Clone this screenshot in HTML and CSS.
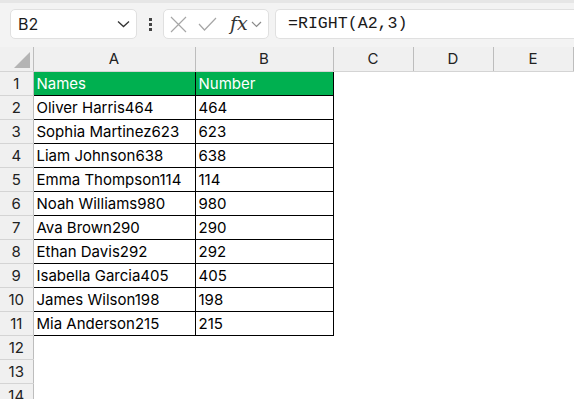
FILE: index.html
```html
<!DOCTYPE html>
<html lang="en">
<head>
    <meta charset="UTF-8">
    <title>RIGHT formula</title>
    <link rel="stylesheet" href="styles.css">
</head>
<body>
    <!-- Barra de fórmulas -->
    <div class="toolbar">
        <div class="name-box">
            <span class="name">B2</span>
            <svg class="chevron" width="13" height="8" viewBox="0 0 13 8"><path d="M1 1.5 L6.5 6.5 L12 1.5" fill="none" stroke="#333" stroke-width="1.3"/></svg>
        </div>
        <div class="dots"><i></i><i></i><i></i></div>
        <div class="fx-box">
            <svg width="17" height="17" viewBox="0 0 17 17"><path d="M1 1 L16 16 M16 1 L1 16" stroke="#a6a6a6" stroke-width="1.2"/></svg>
            <svg width="19" height="14" viewBox="0 0 19 14"><path d="M1 7 L6.5 13 L18 1" fill="none" stroke="#a6a6a6" stroke-width="1.2"/></svg>
            <span class="fx">fx</span>
            <svg width="11" height="7" viewBox="0 0 11 7"><path d="M1 1 L5.5 5.5 L10 1" fill="none" stroke="#8a8a8a" stroke-width="1.2"/></svg>
        </div>
        <div class="formula">=RIGHT(A2,3)</div>
    </div>

    <table class="sheet">
        <colgroup>
            <col class="c-head"><col class="c-a"><col class="c-b"><col class="c-n"><col class="c-n"><col class="c-n">
        </colgroup>
        <tr class="col-heads">
            <th class="corner"><span class="tri"></span></th>
            <th>A</th><th>B</th><th>C</th><th>D</th><th>E</th>
        </tr>
        <tr class="title"><th>1</th><td class="box">Names</td><td class="box">Number</td><td></td><td></td><td></td></tr>
        <tr><th>2</th><td class="box">Oliver Harris464</td><td class="box">464</td><td></td><td></td><td></td></tr>
        <tr><th>3</th><td class="box">Sophia Martinez623</td><td class="box">623</td><td></td><td></td><td></td></tr>
        <tr><th>4</th><td class="box">Liam Johnson638</td><td class="box">638</td><td></td><td></td><td></td></tr>
        <tr><th>5</th><td class="box">Emma Thompson114</td><td class="box">114</td><td></td><td></td><td></td></tr>
        <tr><th>6</th><td class="box">Noah Williams980</td><td class="box">980</td><td></td><td></td><td></td></tr>
        <tr><th>7</th><td class="box">Ava Brown290</td><td class="box">290</td><td></td><td></td><td></td></tr>
        <tr><th>8</th><td class="box">Ethan Davis292</td><td class="box">292</td><td></td><td></td><td></td></tr>
        <tr><th>9</th><td class="box">Isabella Garcia405</td><td class="box">405</td><td></td><td></td><td></td></tr>
        <tr><th>10</th><td class="box">James Wilson198</td><td class="box">198</td><td></td><td></td><td></td></tr>
        <tr><th>11</th><td class="box">Mia Anderson215</td><td class="box">215</td><td></td><td></td><td></td></tr>
        <tr><th>12</th><td></td><td></td><td></td><td></td><td></td></tr>
        <tr><th>13</th><td></td><td></td><td></td><td></td><td></td></tr>
        <tr><th>14</th><td></td><td></td><td></td><td></td><td></td></tr>
    </table>
</body>
</html>
```

FILE: styles.css
```css
* {
    margin: 0;
    padding: 0;
    box-sizing: border-box;
}

body, html {
    font-family: Inter, "Noto Sans", sans-serif;
    background: #fff;
    overflow: hidden;
}

.toolbar {
    height: 47px;
    background: #f3f3f3;
    border-top: 3px solid #e6e6e6;
    display: flex;
    align-items: flex-start;
    padding: 6px 0 0 10px;
}

.name-box {
    width: 127px;
    height: 30px;
    background: #fff;
    border: 1px solid #e0e0e0;
    border-radius: 5px;
    display: flex;
    align-items: center;
    justify-content: space-between;
    padding: 0 6px 0 7px;
}

.name {
    font-size: 16px;
    color: #1a1a1a;
}

.dots {
    width: 26px;
    height: 30px;
    display: flex;
    flex-direction: column;
    align-items: center;
    justify-content: center;
    gap: 2px;
}

.dots i {
    display: block;
    width: 3px;
    height: 3px;
    background: #444;
}

.fx-box {
    width: 106px;
    height: 30px;
    background: #fff;
    border: 1px solid #e0e0e0;
    border-radius: 5px;
    display: flex;
    align-items: center;
    padding: 0 4px 0 6px;
}

.fx-box svg:nth-child(2) {
    margin-left: 11px;
}

.fx {
    font-family: "DejaVu Serif", "Liberation Serif", serif;
    font-style: italic;
    font-size: 19px;
    color: #333;
    margin: 0 3px 0 13px;
    position: relative;
    top: -1px;
}

.formula {
    flex: 1;
    height: 30px;
    margin-left: 6px;
    background: #fff;
    border: 1px solid #e0e0e0;
    border-right: none;
    border-radius: 5px 0 0 5px;
    font-family: "Liberation Mono", monospace;
    font-size: 16.6px;
    color: #1a1a1a;
    line-height: 28px;
    padding-left: 12px;
}

.sheet {
    border-collapse: collapse;
    table-layout: fixed;
    width: 573px;
    font-size: 15px;
    color: #000;
}

.c-head { width: 33px; }
.c-a { width: 162px; }
.c-b { width: 138px; }
.c-n { width: 80px; }

.sheet th {
    background: #f0f0f0;
    font-weight: normal;
    color: #222;
}

.col-heads th {
    height: 23px;
    border-left: 1px solid #d4d4d4;
    border-bottom: 1px solid #bdbdbd;
    text-align: center;
}

.col-heads th.corner {
    border-left: none;
    position: relative;
}

.tri {
    position: absolute;
    right: 3px;
    bottom: 3px;
    width: 0;
    height: 0;
    border-left: 16px solid transparent;
    border-bottom: 16px solid #b4b4b4;
}

.sheet tr {
    height: 24px;
}

.sheet tr th {
    text-align: center;
    border-bottom: 1px solid #d4d4d4;
    border-right: 1px solid #bdbdbd;
}

.sheet td {
    padding: 0 3px;
    white-space: nowrap;
    overflow: hidden;
}

.sheet td.box {
    border: 1px solid #000;
}

.title td.box {
    background: #00b050;
    color: #fff;
}
```
